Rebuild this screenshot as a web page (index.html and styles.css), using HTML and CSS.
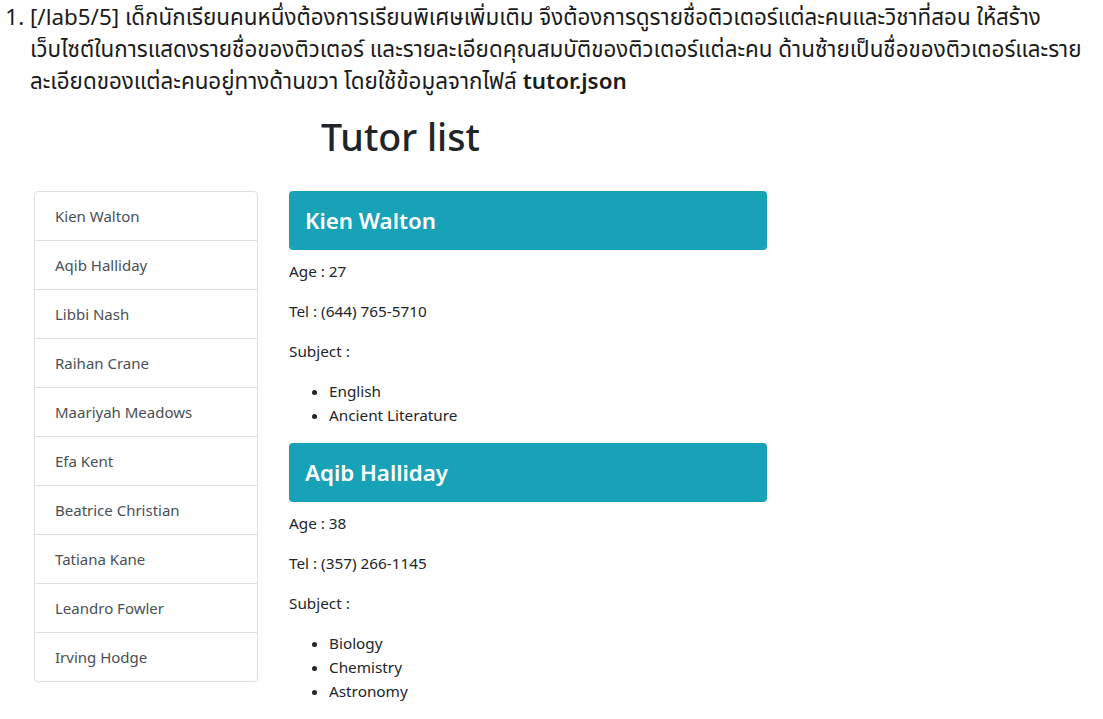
FILE: index.html
```html
<!DOCTYPE html>
<html lang="th">
<head>
<meta charset="utf-8">
<title>Tutor list</title>
<link rel="stylesheet" href="styles.css">
</head>
<body>
<ol class="task">
  <li>[/lab5/5] เด็กนักเรียนคนหนึ่งต้องการเรียนพิเศษเพิ่มเติม จึงต้องการดูรายชื่อติวเตอร์แต่ละคนและวิชาที่สอน ให้สร้าง<br>เว็บไซต์ในการแสดงรายชื่อของติวเตอร์ และรายละเอียดคุณสมบัติของติวเตอร์แต่ละคน ด้านซ้ายเป็นชื่อของติวเตอร์และราย<br>ละเอียดของแต่ละคนอยู่ทางด้านขวา โดยใช้ข้อมูลจากไฟล์ <b>tutor.json</b></li>
</ol>
<div class="app">
  <h1 class="title">Tutor list</h1>
  <div class="row">
    <ul class="names">
      <li>Kien Walton</li>
      <li>Aqib Halliday</li>
      <li>Libbi Nash</li>
      <li>Raihan Crane</li>
      <li>Maariyah Meadows</li>
      <li>Efa Kent</li>
      <li>Beatrice Christian</li>
      <li>Tatiana Kane</li>
      <li>Leandro Fowler</li>
      <li>Irving Hodge</li>
    </ul>
    <div class="details">
      <section class="tutor">
        <h2 class="tutor-name">Kien Walton</h2>
        <p>Age : 27</p>
        <p>Tel : (644) 765-5710</p>
        <p>Subject :</p>
        <ul class="subjects">
          <li>English</li>
          <li>Ancient Literature</li>
        </ul>
      </section>
      <section class="tutor">
        <h2 class="tutor-name">Aqib Halliday</h2>
        <p>Age : 38</p>
        <p>Tel : (357) 266-1145</p>
        <p>Subject :</p>
        <ul class="subjects">
          <li>Biology</li>
          <li>Chemistry</li>
          <li>Astronomy</li>
        </ul>
      </section>
    </div>
  </div>
</div>
</body>
</html>
```
FILE: styles.css
```css
html, body {
  margin: 0;
  padding: 0;
  background: #fff;
}
body {
  font-family: "Noto Sans", "Noto Sans Thai", "Noto Sans CJK SC", sans-serif;
  color: #212529;
}
.task {
  margin: 0;
  padding: 1px 0 0 30px;
  font-size: 22.4px;
  line-height: 32px;
  color: #1b1b1b;
}
.task b {
  font-weight: 600;
}
.app {
  width: 733px;
  margin-left: 34px;
  margin-top: 16px;
}
.title {
  margin: 0;
  text-align: center;
  font-size: 37.6px;
  font-weight: 500;
  line-height: 48px;
  color: #212529;
}
.row {
  display: flex;
  gap: 31px;
  margin-top: 30px;
  align-items: flex-start;
}
.names {
  list-style: none;
  margin: 0;
  padding: 0;
  width: 224px;
  flex: none;
  border: 1px solid #dfdfdf;
  border-radius: 4px;
  box-sizing: border-box;
}
.names li {
  height: 48px;
  line-height: 48px;
  padding-left: 20px;
  font-size: 15px;
  color: #495057;
  border-top: 1px solid #dfdfdf;
}
.names li:first-child {
  border-top: none;
}
.details {
  flex: 1;
  font-size: 15.3px;
  line-height: 24px;
}
.tutor-name {
  margin: 0 0 9px 0;
  height: 59px;
  line-height: 59px;
  padding-left: 16px;
  background: #17a2b8;
  color: #fff;
  border-radius: 4px;
  font-size: 22.3px;
  font-weight: 600;
}
.tutor p {
  margin: 0 0 16px 0;
}
.subjects {
  margin: 0 0 16px 0;
  padding-left: 40px;
}
```
